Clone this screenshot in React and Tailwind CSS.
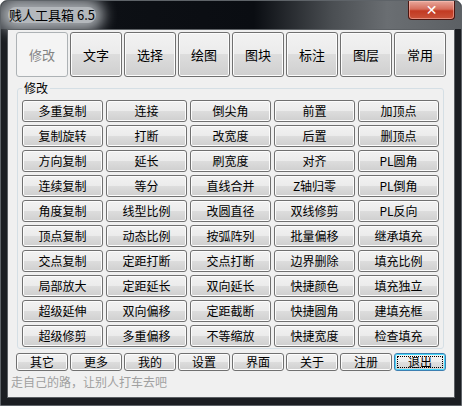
import React from "react"

const tabs = ["修改", "文字", "选择", "绘图", "图块", "标注", "图层", "常用"]

const grid = [
  ["多重复制", "连接", "倒尖角", "前置", "加顶点"],
  ["复制旋转", "打断", "改宽度", "后置", "删顶点"],
  ["方向复制", "延长", "刷宽度", "对齐", "PL圆角"],
  ["连续复制", "等分", "直线合并", "Z轴归零", "PL倒角"],
  ["角度复制", "线型比例", "改圆直径", "双线修剪", "PL反向"],
  ["顶点复制", "动态比例", "按弧阵列", "批量偏移", "继承填充"],
  ["交点复制", "定距打断", "交点打断", "边界删除", "填充比例"],
  ["局部放大", "定距延长", "双向延长", "快捷颜色", "填充独立"],
  ["超级延伸", "双向偏移", "定距截断", "快捷圆角", "建填充框"],
  ["超级修剪", "多重偏移", "不等缩放", "快捷宽度", "检查填充"],
]

const bottom = ["其它", "更多", "我的", "设置", "界面", "关于", "注册"]

// classic win7 push button look
const btn =
  "flex items-center justify-center border border-[#707070] rounded-[3px] text-black bg-[linear-gradient(to_bottom,#f2f2f2_0%,#ebebeb_50%,#dddddd_50%,#cfcfcf_100%)] shadow-[inset_0_0_0_1px_#fcfcfc]"

export default function App() {
  return (
    <div
      className="w-[462px] h-[406px] flex flex-col rounded-t-[7px] bg-[#1b1e22] border border-[#5e6368] overflow-hidden"
      style={{ fontFamily: '"Noto Sans CJK SC", "Liberation Sans", sans-serif' }}
    >
      {/* title bar */}
      <div className="h-[28px] flex items-start justify-between bg-[linear-gradient(90deg,#3c4045_0%,#0d1015_22%,#0a0d12_55%,#4a4e52_72%,#6a6e72_84%,#5c6064_100%)]">
        <span className="self-center ml-[7px] px-[1px] text-[13px] leading-[16px] text-black bg-[#b4b8bc] rounded-[8px] shadow-[0_0_14px_8px_rgba(180,184,188,0.9)]">
          贱人工具箱 6.5
        </span>
        <div className="mr-[6px] w-[47px] h-[19px] flex items-center justify-center rounded-b-[4px] border border-t-0 border-[#4a1510] bg-[linear-gradient(to_bottom,#e8a89c_0%,#d56d5c_45%,#c23a22_55%,#c9533a_100%)] shadow-[inset_0_0_0_1px_rgba(255,200,190,0.5)]">
          <span className="text-white text-[14px] font-bold leading-none" style={{ fontFamily: '"DejaVu Sans", sans-serif' }}>
            ✕
          </span>
        </div>
      </div>

      {/* client area */}
      <div className="mx-[6px] h-[369px] flex flex-col bg-[#f0f0f0] border border-[#5c6064]">
        <div className="flex gap-[2px] pl-[8px] pt-[2px]">
          {tabs.map((t, i) =>
            i === 0 ? (
              <div
                key={t}
                className="w-[52px] h-[45px] flex items-center justify-center border border-[#adb2b5] rounded-[3px] bg-[#f4f4f4] text-[#838383] text-[13px]"
              >
                {t}
              </div>
            ) : (
              <div key={t} className={`${btn} w-[52px] h-[45px] text-[13px]`}>
                {t}
              </div>
            )
          )}
        </div>

        <fieldset className="mt-[3px] ml-[9px] w-[427px] border border-[#d5dfe5] rounded-[3px] px-[4px] pt-[4px] pb-[1px]">
          <legend className="px-[2px] text-[12px] leading-[16px] text-black">修改</legend>
          <div className="grid grid-cols-5 gap-x-[3px] gap-y-[3px]">
            {grid.flat().map((t, i) => (
              <div key={i} className={`${btn} h-[22px] text-[12px] leading-none`}>
                {t}
              </div>
            ))}
          </div>
        </fieldset>

        <div className="flex gap-[2px] pl-[8px] mt-[4px]">
          {bottom.map((t) => (
            <div key={t} className={`${btn} w-[52px] h-[18px] text-[12px] leading-none`}>
              {t}
            </div>
          ))}
          <div className="w-[52px] h-[18px] p-[2px] border border-[#3c7fb1] rounded-[3px] bg-[linear-gradient(to_bottom,#f4f4f4_0%,#ededed_50%,#e0e0e0_50%,#d4d4d4_100%)] shadow-[inset_0_0_0_1px_#48d8fb]">
            <div className="w-full h-full flex items-center justify-center border border-dotted border-black text-[12px] leading-none text-black">
              退出
            </div>
          </div>
        </div>

        <div className="mt-[3px] ml-[3px] text-[12px] leading-[16px] text-[#a0a0a0]">走自己的路，让别人打车去吧</div>
      </div>
    </div>
  )
}
